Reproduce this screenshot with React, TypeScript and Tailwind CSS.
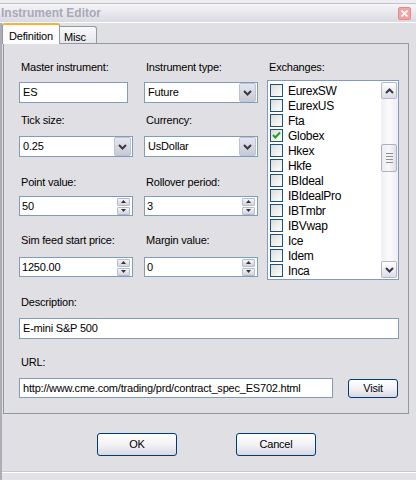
import React from 'react'

const exchanges = [
  { name: 'EurexSW', checked: false },
  { name: 'EurexUS', checked: false },
  { name: 'Fta', checked: false },
  { name: 'Globex', checked: true },
  { name: 'Hkex', checked: false },
  { name: 'Hkfe', checked: false },
  { name: 'IBIdeal', checked: false },
  { name: 'IBIdealPro', checked: false },
  { name: 'IBTmbr', checked: false },
  { name: 'IBVwap', checked: false },
  { name: 'Ice', checked: false },
  { name: 'Idem', checked: false },
  { name: 'Inca', checked: false },
]

function Chevron({ up = false }: { up?: boolean }) {
  return (
    <svg width="9" height="6" viewBox="0 0 9 6">
      <path
        d={up ? 'M1 5 L4.5 1.5 L8 5' : 'M1 1 L4.5 4.5 L8 1'}
        fill="none"
        stroke="#383844"
        strokeWidth="2"
      />
    </svg>
  )
}

function Label({ children }: { children: React.ReactNode }) {
  return <div className="h-[13px] leading-[13px] pl-[2px]">{children}</div>
}

function TextBox({ value, className = '' }: { value: string; className?: string }) {
  return (
    <div className={`h-[21px] bg-white border border-[#7f9db9] pl-[3px] flex items-center ${className}`}>
      {value}
    </div>
  )
}

function Select({ value }: { value: string }) {
  return (
    <div className="h-[21px] w-[114px] bg-white border border-[#7f9db9] flex items-center">
      <span className="flex-1 pl-[3px]">{value}</span>
      <div className="w-[17px] h-[19px] mr-[1px] rounded-[2px] border border-[#b9c3d9] bg-gradient-to-b from-[#e6e6ee] to-[#c9c9d6] flex items-center justify-center">
        <Chevron />
      </div>
    </div>
  )
}

function SpinBox({ value }: { value: string }) {
  return (
    <div className="h-[20px] w-[114px] bg-white border border-[#7f9db9] flex items-center">
      <span className="flex-1 pl-[2px]">{value}</span>
      <div className="flex flex-col gap-[1px] mr-[2px]">
        <div className="w-[13px] h-[8px] rounded-[1px] border border-[#b4bccf] bg-gradient-to-b from-[#f4f4f8] to-[#d4d4de] flex items-center justify-center">
          <svg width="5" height="3" viewBox="0 0 5 3">
            <path d="M0 3 L2.5 0 L5 3 Z" fill="#333" />
          </svg>
        </div>
        <div className="w-[13px] h-[8px] rounded-[1px] border border-[#b4bccf] bg-gradient-to-b from-[#f4f4f8] to-[#d4d4de] flex items-center justify-center">
          <svg width="5" height="3" viewBox="0 0 5 3">
            <path d="M0 0 L2.5 3 L5 0 Z" fill="#333" />
          </svg>
        </div>
      </div>
    </div>
  )
}

function CheckBox({ checked }: { checked: boolean }) {
  return (
    <div className="w-[13px] h-[13px] border border-[#1c5180] bg-gradient-to-br from-[#dcdcd7] to-white flex items-center justify-center">
      {checked && (
        <svg width="11" height="11" viewBox="0 0 11 11">
          <path d="M2 5 L4.3 7.5 L9 2.5" fill="none" stroke="#21a121" strokeWidth="2" />
        </svg>
      )}
    </div>
  )
}

function XpButton({ label, className = '' }: { label: string; className?: string }) {
  return (
    <button
      className={`rounded-[3px] border border-[#003c74] bg-gradient-to-b from-white via-[#f2f2f6] to-[#d8d8e4] flex items-center justify-center ${className}`}
    >
      {label}
    </button>
  )
}

function ScrollBtn({ up }: { up: boolean }) {
  return (
    <div className="w-[16px] h-[17px] rounded-[2px] border border-[#b8b8c8] bg-gradient-to-b from-white to-[#dcdce6] flex items-center justify-center">
      <Chevron up={up} />
    </div>
  )
}

export default function App() {
  return (
    <div className="w-[416px] h-[480px] bg-[#e0dfe3] flex flex-col overflow-hidden font-['Liberation_Sans',Arial,sans-serif] text-[11px] tracking-[-0.2px] text-black">
      {/* Title bar */}
      <div className="h-[3px] bg-[#eeeef2]" />
      <div className="h-[1px] bg-[#c4c3cb]" />
      <div className="h-[18px] bg-gradient-to-b from-[#f6f6f9] to-[#d9d9e1] flex items-center justify-between">
        <span className="pl-[1px] font-bold text-[12px] tracking-normal text-[#a9a8b8]">Instrument Editor</span>
        <div className="mr-[5px] w-[13px] h-[13px] rounded-[2px] border border-[#e08a8a] bg-[#f2a3a3] flex items-center justify-center">
          <svg width="7" height="7" viewBox="0 0 7 7">
            <path d="M0.5 0.5 L6.5 6.5 M6.5 0.5 L0.5 6.5" stroke="#fff" strokeWidth="1.6" />
          </svg>
        </div>
      </div>
      <div className="h-[1px] bg-white" />

      {/* Body */}
      <div className="flex-1 flex flex-col border-l-2 border-[#aeadb5]">
        {/* Tabs */}
        <div className="h-[20px] flex items-start">
          <div className="relative z-10 h-[21px] w-[58px] bg-[#fcfcfe] border-x border-[#919b9c] border-t-2 border-t-[#f7b13c] rounded-t-[3px] pl-[6px] pt-[3px]">
            Definition
          </div>
          <div className="mt-[3px] h-[17px] w-[37px] bg-gradient-to-b from-[#fafafc] to-[#e6e6ec] border-t border-r border-[#919b9c] rounded-tr-[3px] pl-[4px] pt-[2px]">
            Misc
          </div>
        </div>

        {/* Panel */}
        <div className="ml-[1px] w-[406px] h-[371px] border border-[#919b9c] bg-[#e0dfe3] pl-[15px] pt-[17px] flex flex-col">
          <div className="flex items-start">
            {/* Left fields */}
            <div className="flex flex-col">
              <div className="flex gap-[11px]">
                <div className="w-[114px] flex flex-col">
                  <Label>Master instrument:</Label>
                  <TextBox value="ES" className="mt-[8px] w-[109px]" />
                </div>
                <div className="w-[114px] flex flex-col">
                  <Label>Instrument type:</Label>
                  <div className="mt-[8px]">
                    <Select value="Future" />
                  </div>
                </div>
              </div>
              <div className="flex gap-[11px] mt-[11px]">
                <div className="w-[114px] flex flex-col">
                  <Label>Tick size:</Label>
                  <div className="mt-[9px]">
                    <Select value="0.25" />
                  </div>
                </div>
                <div className="w-[114px] flex flex-col">
                  <Label>Currency:</Label>
                  <div className="mt-[9px]">
                    <Select value="UsDollar" />
                  </div>
                </div>
              </div>
              <div className="flex gap-[11px] mt-[19px]">
                <div className="w-[114px] flex flex-col">
                  <Label>Point value:</Label>
                  <div className="mt-[7px]">
                    <SpinBox value="50" />
                  </div>
                </div>
                <div className="w-[114px] flex flex-col">
                  <Label>Rollover period:</Label>
                  <div className="mt-[7px]">
                    <SpinBox value="3" />
                  </div>
                </div>
              </div>
              <div className="flex gap-[11px] mt-[18px]">
                <div className="w-[114px] flex flex-col">
                  <Label>Sim feed start price:</Label>
                  <div className="mt-[10px]">
                    <SpinBox value="1250.00" />
                  </div>
                </div>
                <div className="w-[114px] flex flex-col">
                  <Label>Margin value:</Label>
                  <div className="mt-[10px]">
                    <SpinBox value="0" />
                  </div>
                </div>
              </div>
            </div>

            {/* Exchanges */}
            <div className="ml-[9px] w-[132px] flex flex-col">
              <Label>Exchanges:</Label>
              <div className="mt-[6px] h-[200px] bg-white border border-[#7f9db9] flex">
                <div className="flex-1 flex flex-col pt-[2px] pl-[2px] overflow-hidden">
                  {exchanges.map((ex) => (
                    <div key={ex.name} className="h-[15px] flex items-center gap-[5px]">
                      <CheckBox checked={ex.checked} />
                      <span className="text-[12px] tracking-[-0.3px]">{ex.name}</span>
                    </div>
                  ))}
                </div>
                <div className="w-[17px] my-[1px] mr-[0px] bg-gradient-to-r from-[#eeeef3] via-[#fbfbfd] to-[#eeeef3] flex flex-col">
                  <ScrollBtn up />
                  <div className="flex-1 flex flex-col">
                    <div className="mt-[45px] w-[16px] h-[28px] rounded-[2px] border border-[#b0b0c0] bg-gradient-to-r from-[#eaeaf0] via-[#f8f8fb] to-[#dedee6] flex flex-col items-center justify-center gap-[2px]">
                      <div className="w-[7px] h-[1px] bg-[#8e8e9c]" />
                      <div className="w-[7px] h-[1px] bg-[#8e8e9c]" />
                      <div className="w-[7px] h-[1px] bg-[#8e8e9c]" />
                      <div className="w-[7px] h-[1px] bg-[#8e8e9c]" />
                    </div>
                  </div>
                  <ScrollBtn up={false} />
                </div>
              </div>
            </div>
          </div>

          {/* Description */}
          <div className="mt-[16px]">
            <Label>Description:</Label>
          </div>
          <TextBox value="E-mini S&P 500" className="mt-[9px] w-[380px]" />

          {/* URL */}
          <div className="mt-[17px]">
            <Label>URL:</Label>
          </div>
          <div className="mt-[9px] flex items-center gap-[15px]">
            <TextBox value="http://www.cme.com/trading/prd/contract_spec_ES702.html" className="w-[314px] !h-[20px]" />
            <XpButton label="Visit" className="w-[50px] h-[19px]" />
          </div>
        </div>

        {/* Dialog buttons */}
        <div className="mt-[19px] pl-[95px] flex gap-[59px]">
          <XpButton label="OK" className="w-[80px] h-[23px]" />
          <XpButton label="Cancel" className="w-[80px] h-[23px]" />
        </div>
        <div className="mt-[15px] h-[1px] bg-[#c9c8d0]" />
        <div className="flex-1 border-t border-white bg-[#e3e2e6]" />
      </div>
    </div>
  )
}
